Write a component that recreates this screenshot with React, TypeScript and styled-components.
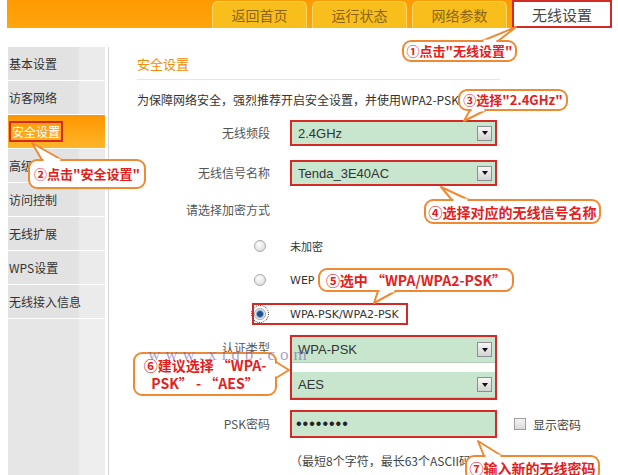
import React from 'react';
import styled, {createGlobalStyle} from 'styled-components';

const GlobalStyle = createGlobalStyle`
  html, body {
    margin: 0;
    padding: 0;
    background: #fff;
  }
  body {
    font-family: "Noto Sans CJK SC", "Liberation Sans", sans-serif;
  }
`;

const RED = '#d42a25';

// nav entries on the left
const navItems: string[] = [
  '基本设置', '访客网络', '安全设置', '高级设置',
  '访问控制', '无线扩展', 'WPS设置', '无线接入信息',
];

interface tail {
  a: [number, number],
  b: [number, number],
  tip: [number, number],
}

// speech bubble tails, page coordinates
const tails: tail[] = [
  {a: [482, 41], b: [498, 41], tip: [516, 27]},
  {a: [470, 110], b: [486, 110], tip: [464, 121]},
  {a: [452, 200], b: [469, 200], tip: [441, 187]},
  {a: [42, 160], b: [62, 160], tip: [32, 143]},
  {a: [378, 291], b: [396, 291], tip: [374, 303]},
  {a: [276, 362], b: [276, 378], tip: [289, 370]},
  {a: [484, 456], b: [502, 456], tip: [478, 441]},
];

const shrink = (p: [number, number], q: [number, number], d: number): [number, number] => {
  const len = Math.hypot(q[0] - p[0], q[1] - p[1]);
  return [p[0] + (q[0] - p[0]) * d / len, p[1] + (q[1] - p[1]) * d / len];
};

const App: React.FC = () => {
  return (
    <Page>
      <GlobalStyle/>
      <Header>
        <HeaderBar>
          <Tab>返回首页</Tab>
          <Tab>运行状态</Tab>
          <Tab>网络参数</Tab>
          <ActiveTab>无线设置</ActiveTab>
        </HeaderBar>
      </Header>

      <Body>
        <Sidebar>
          {navItems.map((item: string, id: number) => {
            return (
              <NavItem key={id} $active={item === '安全设置'}>
                {item === '安全设置' ? <Marked>{item}</Marked> : item}
              </NavItem>
            )
          })}
        </Sidebar>

        <Main>
          <Title>安全设置</Title>
          <Desc>为保障网络安全，强烈推荐开启安全设置，并使用WPA2-PSK AES加密方式。</Desc>

          <Form>
            <Row $h={26}>
              <Label>无线频段</Label>
              <Field>
                <Select $marked>2.4GHz<DropArrow/></Select>
              </Field>
            </Row>
            <Row $h={26} $gap={14}>
              <Label>无线信号名称</Label>
              <Field>
                <Select $marked>Tenda_3E40AC<DropArrow/></Select>
              </Field>
            </Row>
            <Row $h={48}>
              <Label>请选择加密方式</Label>
            </Row>
            <Row $h={24}>
              <Label><Radio/></Label>
              <Field><RadioText>未加密</RadioText></Field>
            </Row>
            <Row $h={24} $gap={10}>
              <Label><Radio/></Label>
              <Field><RadioText>WEP</RadioText></Field>
            </Row>
            <Row $h={24} $gap={10}>
              <Label><Radio $checked/></Label>
              <Field><RadioText>WPA-PSK/WPA2-PSK</RadioText></Field>
            </Row>
            <Row $h={65} $gap={9} $top>
              <Label>认证类型</Label>
              <Field>
                <Group>
                  <Select $inner>WPA-PSK<DropArrow/></Select>
                  <Select $inner>AES<DropArrow/></Select>
                </Group>
              </Field>
            </Row>
            <Row $h={28} $gap={10}>
              <Label>PSK密码</Label>
              <Field>
                <PassInput>••••••••</PassInput>
                <CheckBox/>
                <CheckText>显示密码</CheckText>
              </Field>
            </Row>
            <Row $h={20} $gap={12}>
              <Label/>
              <Field><Hint>（最短8个字符，最长63个ASCII码或64个十六进制字符）</Hint></Field>
            </Row>
          </Form>
        </Main>
      </Body>

      <HighlightBox/>

      <Bubble $x={402} $y={40} $w={115} $h={22} $fs={13}>①点击"无线设置"</Bubble>
      <Bubble $x={458} $y={89} $w={110} $h={22} $fs={13}>③选择"2.4GHz"</Bubble>
      <Bubble $x={424} $y={199} $w={177} $h={25} $fs={14}>④选择对应的无线信号名称</Bubble>
      <Bubble $x={28} $y={159} $w={118} $h={30} $fs={13}>②点击"安全设置"</Bubble>
      <Bubble $x={318} $y={268} $w={196} $h={24} $fs={14}>⑤选中 “WPA/WPA2-PSK”</Bubble>
      <Bubble $x={133} $y={352} $w={144} $h={44} $fs={14}>⑥建议选择 “WPA-<br/>PSK” - “AES”</Bubble>
      <Bubble $x={465} $y={455} $w={135} $h={26} $fs={14}>⑦输入新的无线密码</Bubble>

      <Tails width={618} height={475} viewBox="0 0 618 475">
        {tails.map((t: tail, id: number) => {
          const p1 = shrink(t.a, t.b, 1.6);
          const p2 = shrink(t.b, t.a, 1.6);
          return (
            <g key={id}>
              <polygon
                points={`${t.a.join(',')} ${t.tip.join(',')} ${t.b.join(',')}`}
                fill="#fff"
                stroke="#ef8a33"
                strokeWidth={2}
                strokeLinejoin="round"
              />
              <line x1={p1[0]} y1={p1[1]} x2={p2[0]} y2={p2[1]} stroke="#fff" strokeWidth={2.8}/>
            </g>
          )
        })}
      </Tails>

      <Watermark>www.xiqb.com</Watermark>
    </Page>
  )
};

export default App;


const Page = styled.div`
  position: relative;
  width: 618px;
  height: 475px;
  overflow: hidden;
  background: #fff;
`;
const Header = styled.div`
  display: flex;
  height: 28px;
  padding: 0 6px 0 7px;
`;
const HeaderBar = styled.div`
  flex: 1;
  display: flex;
  justify-content: flex-end;
  align-items: flex-end;
  gap: 5px;
  background: linear-gradient(#ff9a00, #ffa50e);
`;
const Tab = styled.div`
  width: 95px;
  height: 27px;
  box-sizing: border-box;
  display: flex;
  align-items: center;
  justify-content: center;
  border: 1px solid #fdd56a;
  border-bottom: none;
  border-radius: 6px 6px 0 0;
  background: #f8bf1c;
  color: #8d6418;
  font-size: 14px;
`;
const ActiveTab = styled(Tab)`
  width: 100px;
  height: 28px;
  border: 2px solid ${RED};
  border-radius: 0;
  background: #fff;
  color: #484848;
  font-size: 15px;
`;
const Body = styled.div`
  display: flex;
  height: 447px;
  box-sizing: border-box;
  padding: 19px 0 0 8px;
`;
const Sidebar = styled.div`
  width: 97px;
  display: flex;
  flex-direction: column;
  background: linear-gradient(to right, #e6e6e6 72%, #eeeeee 74%);
`;
const NavItem = styled.div<{$active?: boolean}>`
  height: 34px;
  box-sizing: border-box;
  display: flex;
  align-items: center;
  padding-left: 1px;
  border-bottom: 1px solid #fff;
  font-size: 12px;
  color: ${p => p.$active ? '#fff' : '#333'};
  background: ${p => p.$active
    ? 'linear-gradient(#ff9600, #ffb52a)'
    : 'linear-gradient(to right, #e2e2e2 72%, #ebebeb 74%)'};
`;
const Marked = styled.span`
  display: inline-block;
  border: 2px solid ${RED};
  padding: 0 1px;
  line-height: 17px;
`;
const Main = styled.div`
  flex: 1;
  margin-left: 3px;
  border-left: 1px solid #d6d6d6;
  padding: 7px 0 0 28px;
`;
const Title = styled.div`
  width: 363px;
  font-size: 13px;
  line-height: 20px;
  color: #ef8d05;
  padding-bottom: 5px;
  border-bottom: 1px solid #e6e6e6;
`;
const Desc = styled.div`
  margin-top: 10px;
  font-size: 12px;
  line-height: 20px;
  color: #333;
  white-space: nowrap;
`;
const Form = styled.div`
  margin-top: 10px;
  display: flex;
  flex-direction: column;
`;
const Row = styled.div<{$h: number, $gap?: number, $top?: boolean}>`
  display: flex;
  align-items: ${p => p.$top ? 'flex-start' : 'center'};
  height: ${p => p.$h}px;
  margin-top: ${p => p.$gap || 0}px;
`;
const Label = styled.div`
  width: 133px;
  flex-shrink: 0;
  display: flex;
  justify-content: flex-end;
  align-items: center;
  font-size: 12px;
  line-height: 26px;
  color: #555;
  & > span {
    margin-right: 4px;
  }
`;
const Field = styled.div`
  margin-left: 20px;
  display: flex;
  align-items: center;
`;
const Select = styled.div<{$marked?: boolean, $inner?: boolean}>`
  width: ${p => p.$inner ? '100%' : '207px'};
  height: 26px;
  box-sizing: border-box;
  display: flex;
  align-items: center;
  justify-content: space-between;
  padding: 0 3px 0 6px;
  border: ${p => p.$marked ? `2px solid ${RED}` : 'none'};
  border-bottom: ${p => p.$inner ? '1px solid #b4ccb8' : ''};
  background: #c8e6cd;
  font-family: "Liberation Sans", Arial, sans-serif;
  font-size: 13px;
  color: #333;
`;
const DropArrow = styled.span`
  width: 15px;
  height: 15px;
  box-sizing: border-box;
  display: flex;
  align-items: center;
  justify-content: center;
  border: 1px solid #8e8e8e;
  background: linear-gradient(#f7f7f7, #d3d3d3);
  &::after {
    content: '';
    border-left: 3.5px solid transparent;
    border-right: 3.5px solid transparent;
    border-top: 4px solid #111;
  }
`;
const Group = styled.div`
  width: 207px;
  height: 65px;
  box-sizing: border-box;
  display: flex;
  flex-direction: column;
  justify-content: space-between;
  border: 2px solid ${RED};
  background: #fff;
`;
const Radio = styled.span<{$checked?: boolean}>`
  display: inline-block;
  width: 12px;
  height: 12px;
  box-sizing: border-box;
  border-radius: 50%;
  border: 1px solid #a9a9a9;
  background: ${p => p.$checked
    ? 'radial-gradient(circle, #1d4f92 0 2.4px, #5f8fc8 3.2px, #e6ecf3 4.4px)'
    : 'radial-gradient(circle at 40% 35%, #fdfdfd, #d6d6d6)'};
  outline: ${p => p.$checked ? '1px dotted #333' : 'none'};
  outline-offset: 2px;
`;
const RadioText = styled.span`
  font-family: "DejaVu Sans", "Noto Sans CJK SC", sans-serif;
  font-size: 11px;
  color: #333;
`;
const PassInput = styled.div`
  width: 207px;
  height: 28px;
  box-sizing: border-box;
  display: flex;
  align-items: center;
  padding-left: 4px;
  border: 2px solid ${RED};
  background: #c8e6cd;
  font-family: "Liberation Sans", Arial, sans-serif;
  font-size: 16px;
  letter-spacing: 1px;
  color: #222;
`;
const CheckBox = styled.span`
  width: 12px;
  height: 12px;
  box-sizing: border-box;
  margin-left: 17px;
  border: 1px solid #9c9c9c;
  background: linear-gradient(#f4f4f4, #dcdcdc);
`;
const CheckText = styled.span`
  margin-left: 7px;
  font-size: 12px;
  color: #444;
`;
const Hint = styled.span`
  font-size: 12px;
  color: #444;
  white-space: nowrap;
`;
const HighlightBox = styled.div`
  position: absolute;
  left: 252px;
  top: 303px;
  width: 156px;
  height: 22px;
  box-sizing: border-box;
  border: 2px solid ${RED};
`;
const Bubble = styled.div<{$x: number, $y: number, $w: number, $h: number, $fs: number}>`
  position: absolute;
  left: ${p => p.$x}px;
  top: ${p => p.$y}px;
  width: ${p => p.$w}px;
  height: ${p => p.$h}px;
  box-sizing: border-box;
  display: flex;
  align-items: center;
  justify-content: center;
  text-align: center;
  border: 2px solid #ef8a33;
  border-radius: 9px;
  background: #fff;
  color: #e3211c;
  font-weight: 700;
  font-size: ${p => p.$fs}px;
  line-height: 18px;
  white-space: nowrap;
`;
const Tails = styled.svg`
  position: absolute;
  left: 0;
  top: 0;
  pointer-events: none;
`;
const Watermark = styled.div`
  position: absolute;
  left: 148px;
  top: 345px;
  font-family: "Liberation Serif", serif;
  font-size: 17px;
  letter-spacing: 5px;
  color: rgba(110, 95, 170, 0.6);
  pointer-events: none;
`;
